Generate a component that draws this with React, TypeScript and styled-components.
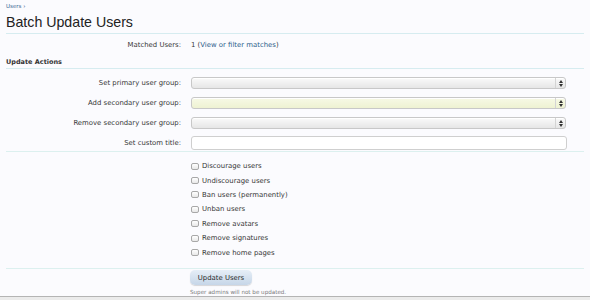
import React from 'react'
import styled, { createGlobalStyle } from 'styled-components'

const GlobalStyle = createGlobalStyle`
  html, body {
    margin: 0;
    padding: 0;
    background: #fbfbfe;
  }
  body {
    font-family: "DejaVu Sans", Verdana, sans-serif;
    color: #333;
  }
`

const Page = styled.div`
  width: 590px;
  height: 300px;
  display: flex;
  flex-direction: column;
  overflow: hidden;
`

const Content = styled.div`
  flex: 1;
  padding: 0 6px;
`

const Breadcrumb = styled.div`
  height: 12px;
  padding-top: 1px;
  font-size: 5.5px;
  line-height: 10px;
  color: #3b6a96;
`

const Title = styled.h1`
  margin: 0;
  height: 20px;
  font-family: "Liberation Sans", Arial, sans-serif;
  font-weight: normal;
  font-size: 14.2px;
  line-height: 18px;
  color: #222;
  border-bottom: 1px solid #d6ecf0;
`

const Row = styled.div<{ $h: number; $mt?: number }>`
  display: flex;
  align-items: center;
  gap: 10px;
  height: ${p => p.$h}px;
  margin-top: ${p => p.$mt ?? 0}px;
`

const Label = styled.div`
  width: 175px;
  flex-shrink: 0;
  text-align: right;
  font-size: 6.9px;
  color: #363636;
`

const Value = styled.div`
  font-size: 6.9px;
  color: #363636;
`

const Link = styled.a`
  color: #2d5d8a;
  text-decoration: none;
`

const SectionHead = styled.div`
  height: 12px;
  display: flex;
  align-items: center;
  font-size: 6.5px;
  font-weight: bold;
  color: #333;
  border-bottom: 1px solid #d6ecf0;
`

const Controls = styled.div`
  padding-top: 8px;
`

const SelectBox = styled.div<{ $hl?: boolean }>`
  box-sizing: border-box;
  width: 375px;
  height: 12px;
  display: flex;
  justify-content: flex-end;
  border: 1px solid #c8c8c8;
  border-radius: 3px;
  background: ${p =>
    p.$hl
      ? 'linear-gradient(#f7f9e6, #eef2d2)'
      : 'linear-gradient(#fafafa, #e6e6e6)'};
  box-shadow: inset 0 1px 0 #fff;
`

const Arrows = styled.div`
  width: 9px;
  display: flex;
  align-items: center;
  justify-content: center;
  border-left: 1px solid #d4d4d4;
`

const TextBox = styled.input`
  box-sizing: border-box;
  width: 376px;
  height: 14px;
  margin: 0;
  border: 1px solid #cfcfcf;
  border-radius: 3px;
  background: #fff;
  outline: none;
`

const Divider = styled.div<{ $mt: number }>`
  margin-top: ${p => p.$mt}px;
  border-top: 1px solid #dcf0ef;
`

const Checks = styled.div`
  display: flex;
  flex-direction: column;
  padding: 7px 0 0 185px;
  height: 108px;
`

const CheckRow = styled.label`
  display: flex;
  align-items: center;
  gap: 3px;
  height: 14.4px;
  font-size: 6.9px;
  color: #363636;
`

const Box = styled.input`
  appearance: none;
  margin: 0;
  width: 8px;
  height: 7px;
  border: 1px solid #a8a8a8;
  border-radius: 2px;
  background: linear-gradient(#fff, #e8e8e8);
`

const Submit = styled.div`
  padding: 1px 0 0 184px;
  display: flex;
  flex-direction: column;
  align-items: flex-start;
`

const Button = styled.button`
  width: 62px;
  height: 15px;
  padding: 0;
  border: none;
  border-radius: 5px;
  background: linear-gradient(#e6eef7, #c6d6e8);
  box-shadow: 0 1px 1px rgba(0, 0, 0, 0.15);
  font-family: "DejaVu Sans", Verdana, sans-serif;
  font-size: 6.9px;
  color: #2a2a2a;
`

const Note = styled.div`
  margin-top: 4px;
  font-size: 5.6px;
  color: #7a7a7a;
`

const Footer = styled.div`
  height: 3px;
  border-top: 1px solid #b4b4b4;
  background: #ebebeb;
`

const ArrowIcon = () => (
  <svg width="4" height="7" viewBox="0 0 4 7">
    <path d="M0 3 L2 0 L4 3 Z" fill="#333" />
    <path d="M0 4 L2 7 L4 4 Z" fill="#333" />
  </svg>
)

const Select = ({ hl }: { hl?: boolean }) => (
  <SelectBox $hl={hl}>
    <Arrows>
      <ArrowIcon />
    </Arrows>
  </SelectBox>
)

const checks = [
  'Discourage users',
  'Undiscourage users',
  'Ban users (permanently)',
  'Unban users',
  'Remove avatars',
  'Remove signatures',
  'Remove home pages',
]

export default function App() {
  return (
    <Page>
      <GlobalStyle />
      <Content>
        <Breadcrumb>Users ›</Breadcrumb>
        <Title>Batch Update Users</Title>
        <Row $h={22}>
          <Label>Matched Users:</Label>
          <Value>
            1 (<Link href="#">View or filter matches</Link>)
          </Value>
        </Row>
        <SectionHead>Update Actions</SectionHead>
        <Controls>
          <Row $h={12}>
            <Label>Set primary user group:</Label>
            <Select />
          </Row>
          <Row $h={12} $mt={8}>
            <Label>Add secondary user group:</Label>
            <Select hl />
          </Row>
          <Row $h={12} $mt={8}>
            <Label>Remove secondary user group:</Label>
            <Select />
          </Row>
          <Row $h={14} $mt={7}>
            <Label>Set custom title:</Label>
            <TextBox type="text" />
          </Row>
        </Controls>
        <Divider $mt={1} />
        <Checks>
          {checks.map(c => (
            <CheckRow key={c}>
              <Box type="checkbox" />
              {c}
            </CheckRow>
          ))}
        </Checks>
        <Divider $mt={1} />
        <Submit>
          <Button>Update Users</Button>
          <Note>Super admins will not be updated.</Note>
        </Submit>
      </Content>
      <Footer />
    </Page>
  )
}
